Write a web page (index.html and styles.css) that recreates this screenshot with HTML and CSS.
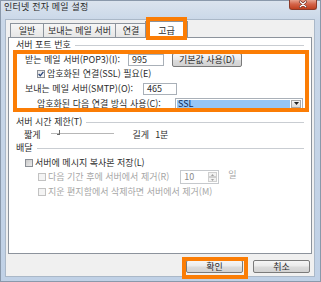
FILE: index.html
```html
<!DOCTYPE html>
<html lang="ko">
<head>
<meta charset="utf-8">
<title>인터넷 전자 메일 설정</title>
<link rel="stylesheet" href="styles.css">
</head>
<body>
<div class="window">
  <div class="titlebar">
    <span class="title">인터넷 전자 메일 설정</span>
    <span class="close"><svg width="28" height="10" viewBox="0 0 28 10"><path d="M11 2.5 L17 8 M17 2.5 L11 8" stroke="#5a1a10" stroke-width="2.6" stroke-linecap="round"/><path d="M11 2.5 L17 8 M17 2.5 L11 8" stroke="#ffffff" stroke-width="1.4" stroke-linecap="round"/></svg></span>
  </div>
  <div class="client">
    <div class="tabs">
      <span class="tab t1">일반</span>
      <span class="tab t2">보내는 메일 서버</span>
      <span class="tab t3">연결</span>
      <span class="tab active mark-tab">고급</span>
    </div>
    <div class="panel">
      <div class="group-title"><span>서버 포트 번호</span><i class="rule"></i></div>
      <div class="ports mark-ports">
        <div class="row r1">
          <span class="lbl w1">받는 메일 서버(POP3)(I):</span>
          <span class="field f1">995</span>
          <span class="btn btn-default">기본값 사용(D)</span>
        </div>
        <div class="row r2">
          <span class="chk checked"><svg width="6" height="6" viewBox="0 0 6 6"><path d="M0.6 3 L2.3 4.8 L5.4 0.8" fill="none" stroke="#26437a" stroke-width="1.3"/></svg></span>
          <span>암호화된 연결(SSL) 필요(E)</span>
        </div>
        <div class="row r3">
          <span class="lbl w3">보내는 메일 서버(SMTP)(O):</span>
          <span class="field f3">465</span>
        </div>
        <div class="row r4">
          <span class="lbl w4">암호화된 다음 연결 방식 사용(C):</span>
          <span class="combo"><span class="combo-val">SSL</span><span class="combo-btn"><svg width="5" height="3" viewBox="0 0 5 3"><path d="M0 0 H5 L2.5 3 Z" fill="#222"/></svg></span></span>
        </div>
      </div>
      <div class="group-title g2"><span>서버 시간 제한(T)</span><i class="rule"></i></div>
      <div class="row slider-row">
        <span>짧게</span>
        <span class="slider"><span class="thumb"></span></span>
        <span class="long">길게</span>
        <span class="minute">1분</span>
      </div>
      <div class="group-title g3"><span>배달</span><i class="rule"></i></div>
      <div class="row d1">
        <span class="chk grey"></span>
        <span>서버에 메시지 복사본 저장(L)</span>
      </div>
      <div class="row d2 disabled">
        <span class="chk dis"></span>
        <span>다음 기간 후에 서버에서 제거(R)</span>
        <span class="spin"><span class="spin-val">10</span><span class="spin-btns"><span class="sb"><svg width="3" height="2" viewBox="0 0 3 2"><path d="M0 2 H3 L1.5 0 Z" fill="#a0a0a0"/></svg></span><span class="sb"><svg width="3" height="2" viewBox="0 0 3 2"><path d="M0 0 H3 L1.5 2 Z" fill="#a0a0a0"/></svg></span></span></span>
        <span class="day">일</span>
      </div>
      <div class="row d3 disabled">
        <span class="chk dis"></span>
        <span>지운 편지함에서 삭제하면 서버에서 제거(M)</span>
      </div>
    </div>
    <div class="buttons">
      <span class="btn dlg mark-ok">확인</span>
      <span class="btn dlg">취소</span>
    </div>
  </div>
</div>
</body>
</html>
```
FILE: styles.css
```css
* { box-sizing: border-box; }
html, body { margin: 0; padding: 0; }
body {
  width: 321px; height: 282px; overflow: hidden;
  font-family: "Noto Sans CJK KR", "Noto Sans", sans-serif;
  font-size: 9px; line-height: 10px; color: #2c2c2c;
  background: #ffffff;
}
.window {
  width: 321px; height: 282px;
  display: flex; flex-direction: column;
  background: linear-gradient(#dbe4ee, #c9d7e8 20px, #c0d1e6);
  border: 1px solid #8a99ab;
}
.titlebar {
  height: 18px; flex: 0 0 18px;
  display: flex; justify-content: space-between; align-items: flex-start;
}
.title { padding: 1px 0 0 3px; color: #2a2a2a; letter-spacing: 0.2px; }
.close {
  width: 28px; height: 10px; margin: -1px 3px 0 0;
  background: linear-gradient(#e7a38f, #d4654a 45%, #c0401f);
  border: 1px solid #8c3a28; border-top: none;
  border-radius: 0 0 3px 3px;
  display: flex;
}
.close svg { display: block; margin-top: -1px; }
.client {
  flex: 1 1 auto;
  margin: 0 5px 4px 4px;
  background: #f0f0f0;
  border: 1px solid #aab8c8;
  padding: 1px 2px 0 2px;
  display: flex; flex-direction: column;
}
.tabs {
  height: 16px; flex: 0 0 16px;
  display: flex; align-items: flex-end;
  padding-left: 2px;
  position: relative; z-index: 2;
}
.tab {
  height: 14px; text-align: center; padding-top: 2px;
  border: 1px solid #8c939c; border-bottom: none;
  background: linear-gradient(#f6f6f6, #e6e6e6);
  color: #2a2a2a;
}
.t1 { width: 34px; }
.t2 { width: 73px; margin-left: -1px; }
.t3 { width: 32px; margin-left: -1px; }
.tab.active {
  width: 43px; height: 17px; margin-left: -2px; margin-bottom: -1px;
  background: #ffffff; padding-top: 4px;
  position: relative;
}
.mark-tab::after {
  content: ""; position: absolute;
  left: 0px; right: 0px; top: -5px; bottom: -2px;
  border: 4px solid #fb7d05;
}
.panel {
  height: 217px; flex: 0 0 217px;
  background: #ffffff;
  border: 1px solid #8c939c;
  padding: 2px 7px 0 7px;
  position: relative; z-index: 1;
}
.group-title {
  display: flex; align-items: center; height: 10px;
}
.rule { flex: 1 1 auto; height: 1px; background: #c9cdd2; margin-left: 4px; margin-top: 1px; }
.g2 { margin-top: 6px; }
.g3 { margin-top: 3px; }
.ports { margin-top: 2px; position: relative; }
.mark-ports::after {
  content: ""; position: absolute;
  left: -3px; right: -5px; top: -2px; bottom: -1px;
  border: 4px solid #fb7d05;
  pointer-events: none;
}
.row { display: flex; align-items: center; }
.r1 { height: 15px; padding-left: 9px; }
.r2 { height: 14px; padding-left: 21px; }
.r3 { height: 15px; padding-left: 9px; }
.r4 { height: 15px; padding-left: 21px; }
.lbl { flex: 0 0 auto; white-space: nowrap; }
.w1 { width: 103px; }
.w3 { width: 118px; }
.w4 { width: 138px; }
.field {
  height: 12px; border: 1px solid #a9b0b8; background: #fff;
  padding: 0 0 0 3px; line-height: 10px;
}
.f1 { width: 36px; }
.f3 { width: 34px; }
.btn {
  display: flex; align-items: center; justify-content: center;
  border: 1px solid #7a7a7a; border-radius: 2px;
  background: linear-gradient(#f6f6f6 0%, #eaeaea 48%, #dcdcdc 52%, #d2d2d2 100%);
  color: #2a2a2a;
}
.btn-default { width: 70px; height: 14px; margin-left: 8px; }
.chk {
  width: 8px; height: 8px; flex: 0 0 8px;
  border: 1px solid #8b8f95; background: linear-gradient(135deg, #dcdcdc, #f7f7f7);
  margin-right: 2px;
  display: flex; align-items: center; justify-content: center;
}
.chk.checked { background: linear-gradient(135deg, #e6e6e6, #fbfbfb); }
.chk.grey { background: linear-gradient(135deg, #c9c9c9, #ececec); }
.chk.dis { border-color: #c2c2c2; background: #f4f4f4; }
.combo {
  width: 128px; height: 12px; border: 1px solid #a9b0b8; background: #fff;
  display: flex; padding: 1px;
}
.combo-val {
  flex: 1 1 auto; background: #96c6f6; color: #0f2a55;
  line-height: 8px; padding-left: 1px; font-size: 9px;
}
.combo-btn {
  width: 10px; flex: 0 0 10px; margin-left: 1px;
  border: 1px solid #a7a7a7; background: linear-gradient(#f4f4f4, #dadada);
  display: flex; align-items: center; justify-content: center;
}
.slider-row { height: 10px; margin-top: 3px; padding-left: 8px; }
.slider {
  width: 63px; height: 6px; margin-left: 10px; position: relative;
  border-top: 1px solid #b7b7b7; margin-top: 2px;
}
.thumb {
  position: absolute; left: 6px; top: -4px;
  width: 3px; height: 5px;
  border-right: 1px solid #6a6a6a; border-bottom: 1px solid #6a6a6a;
}
.long { margin-left: 19px; }
.minute { margin-left: 6px; }
.d1 { height: 10px; margin-top: 5px; padding-left: 9px; }
.d2 { height: 14px; margin-top: 2px; padding-left: 22px; }
.d3 { height: 10px; margin-top: 3px; padding-left: 22px; }
.disabled { color: #a6a6a6; }
.spin {
  width: 39px; height: 14px; margin-left: 11px;
  border: 1px solid #c6c9cd; background: #fff;
  display: flex; color: #8c8c8c;
}
.spin-val { flex: 1 1 auto; padding-left: 3px; line-height: 12px; }
.spin-btns { width: 10px; display: flex; flex-direction: column; padding: 1px 1px 1px 0; }
.sb {
  flex: 1 1 0; border: 1px solid #cfcfcf; background: #f2f2f2;
  display: flex; align-items: center; justify-content: center;
}
.day { margin-left: 9px; margin-top: -4px; }
.buttons {
  display: flex; justify-content: flex-end; gap: 10px;
  padding: 6px 2px 0 0;
}
.dlg { width: 57px; height: 13px; position: relative; }
.mark-ok::after {
  content: ""; position: absolute;
  left: -5px; right: -6px; top: -4px; bottom: -7px;
  border: 4px solid #fb7d05;
}
```
